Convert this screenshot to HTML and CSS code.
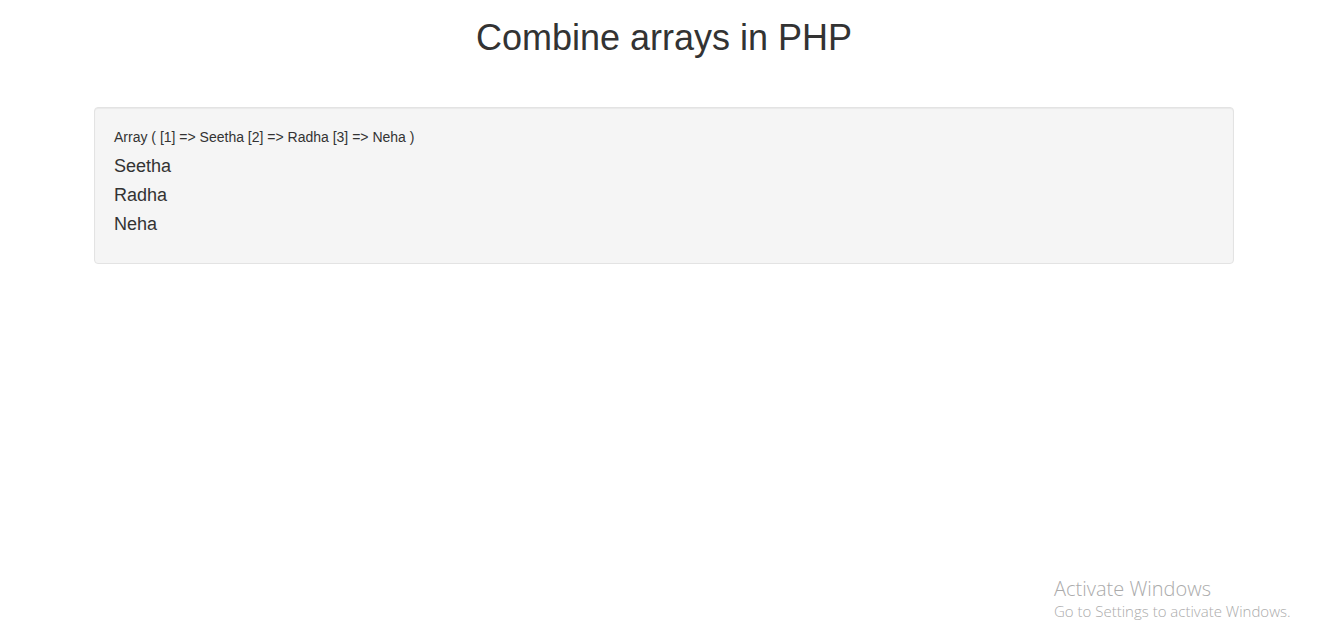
FILE: index.html
```html
<!DOCTYPE html>
<html>
<head>
<meta charset="utf-8">
<title>Combine arrays in PHP</title>
<link rel="stylesheet" href="styles.css">
</head>
<body>
<div class="container">
  <h1 class="title">Combine arrays in PHP</h1>
  <div class="well">
    <div class="dump">Array ( [1] =&gt; Seetha [2] =&gt; Radha [3] =&gt; Neha )</div>
    <div class="item">Seetha</div>
    <div class="item">Radha</div>
    <div class="item">Neha</div>
  </div>
</div>
<div class="activate">
  <div class="activate-title">Activate Windows</div>
  <div class="activate-sub">Go to Settings to activate Windows.</div>
</div>
</body>
</html>
```
FILE: styles.css
```css
html, body {
  margin: 0;
  padding: 0;
}
body {
  font-family: "Liberation Sans", Arial, sans-serif;
  font-size: 14px;
  line-height: 20px;
  color: #333;
  background: #fff;
}
.container {
  width: 1140px;
  margin-left: calc(50% - 583.5px);
  padding: 0 15px;
}
.title {
  margin: 18px 0 0;
  font-size: 36px;
  font-weight: 500;
  line-height: 40px;
  text-align: center;
  color: #333;
}
.well {
  margin-top: 49px;
  min-height: 20px;
  padding: 19px;
  background: #f5f5f5;
  border: 1px solid #e3e3e3;
  border-radius: 4px;
  box-shadow: inset 0 1px 1px rgba(0,0,0,0.05);
}
.dump {
  font-size: 14px;
  line-height: 20px;
}
.item {
  font-size: 18px;
  line-height: 29px;
  padding-top: 5px;
  margin-bottom: -5px;
}
.item:last-child {
  margin-bottom: 0;
  padding-bottom: 5px;
}
.activate {
  position: absolute;
  left: 1054px;
  top: 576px;
  color: #ababab;
  font-family: "Open Sans", "Noto Sans", sans-serif;
  font-weight: 300;
}
.activate-title {
  font-size: 20px;
  line-height: 26px;
}
.activate-sub {
  font-size: 15px;
  line-height: 19px;
}
```
